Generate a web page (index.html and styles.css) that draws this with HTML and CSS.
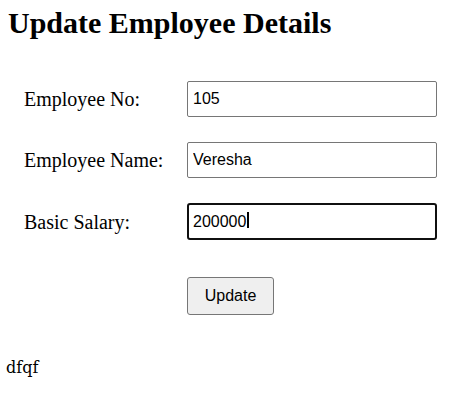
FILE: index.html
```html
<!DOCTYPE html>
<html>
<head>
<meta charset="utf-8">
<link rel="stylesheet" href="styles.css">
</head>
<body>
<h1 class="title">Update Employee Details</h1>
<form class="form">
  <label class="label" for="eno">Employee No:</label>
  <input class="field" id="eno" type="text" value="105">
  <label class="label" for="ename">Employee Name:</label>
  <input class="field" id="ename" type="text" value="Veresha">
  <label class="label" for="sal">Basic Salary:</label>
  <div class="field-wrap">
    <input class="field field-focus" id="sal" type="text" value="200000">
    <span class="caret"></span>
  </div>
  <div class="btn-cell"><button class="btn" type="button">Update</button></div>
</form>
<p class="note">dfqf</p>
</body>
</html>
```
FILE: styles.css
```css
html, body {
  margin: 0;
  padding: 0;
  background: #fff;
  color: #000;
}
body {
  font-family: "Liberation Serif", serif;
}
.title {
  margin: 5px 0 0 8px;
  font-size: 30px;
  line-height: 36px;
  font-weight: bold;
}
.form {
  display: grid;
  grid-template-columns: 163px 250px;
  row-gap: 25px;
  align-items: center;
  margin: 40px 0 0 24px;
}
.label {
  font-size: 20px;
  line-height: 22px;
}
.field {
  box-sizing: border-box;
  width: 250px;
  height: 36px;
  margin: 0;
  padding: 0 5px;
  border: 1px solid #767676;
  border-radius: 2px;
  font-family: "Liberation Sans", Arial, sans-serif;
  font-size: 16px;
  color: #000;
  background: #fff;
  outline: none;
}
.field-wrap {
  position: relative;
  height: 37px;
}
.field-focus {
  height: 37px;
  border: 2px solid #101010;
  border-radius: 3px;
  padding: 0 4px;
}
.caret {
  position: absolute;
  left: 60px;
  top: 9px;
  width: 2px;
  height: 16px;
  background: #000;
}
.btn-cell {
  grid-column: 2;
  margin-top: 12px;
}
.btn {
  box-sizing: border-box;
  width: 87px;
  height: 38px;
  margin: 0;
  padding: 0;
  border: 1px solid #767676;
  border-radius: 3px;
  background: #efefef;
  font-family: "Liberation Sans", Arial, sans-serif;
  font-size: 16px;
  color: #000;
}
.note {
  margin: 43px 0 0 6px;
  font-family: "DejaVu Serif", serif;
  font-size: 16px;
  line-height: 19px;
}
```
